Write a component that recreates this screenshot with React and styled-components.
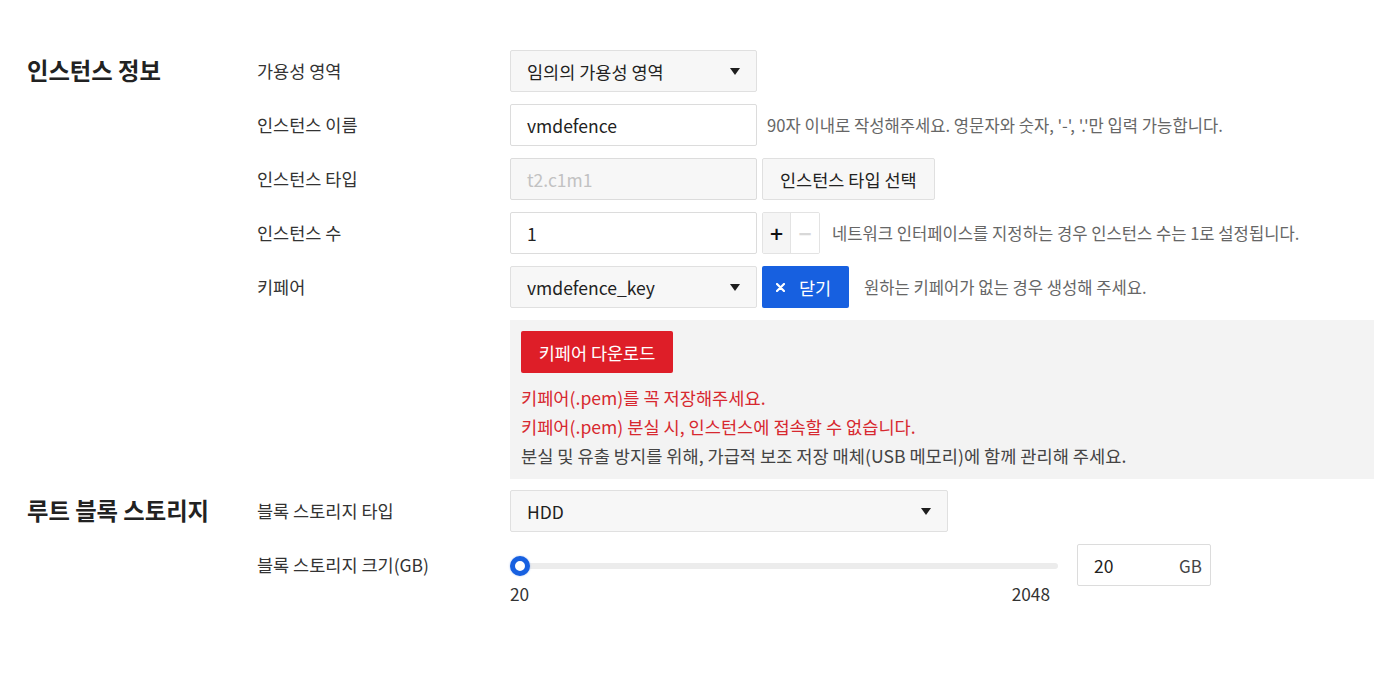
import React from "react";
import styled, { createGlobalStyle } from "styled-components";

const Global = createGlobalStyle`
  html, body { margin: 0; padding: 0; background: #fff; }
  body {
    font-family: "Noto Sans CJK KR", "Noto Sans", sans-serif;
    color: #333;
    -webkit-font-smoothing: antialiased;
  }
  * { box-sizing: border-box; }
`;

const Page = styled.div`
  padding: 50px 17px 80px 27px;
  display: flex;
  flex-direction: column;
  gap: 11px;
`;

const Section = styled.section`
  display: grid;
  grid-template-columns: 230px 1fr;
`;

const SectionTitle = styled.h2`
  margin: 0;
  font-size: 23.3px;
  font-weight: 700;
  color: #222;
  line-height: 40px;
`;

const Rows = styled.div`
  display: flex;
  flex-direction: column;
  gap: 12px;
`;

const Row = styled.div`
  display: grid;
  grid-template-columns: 253px 1fr;
  align-items: ${(p) => (p.$top ? "start" : "center")};
`;

const Label = styled.div`
  font-size: 17.5px;
  color: #333;
  line-height: 42px;
  white-space: nowrap;
`;

const Controls = styled.div`
  display: flex;
  align-items: ${(p) => (p.$top ? "flex-start" : "center")};
  gap: 5px;
`;

const Field = styled.div`
  width: ${(p) => p.$w || 247}px;
  height: 42px;
  border: 1px solid ${(p) => (p.$select ? "#e0e0e0" : "#dcdcdc")};
  border-radius: 2px;
  background: ${(p) => (p.$select || p.$disabled ? "#f7f7f7" : "#fff")};
  color: ${(p) => (p.$disabled ? "#c2c2c2" : "#222")};
  font-size: 17.5px;
  display: flex;
  align-items: center;
  justify-content: space-between;
  padding: 0 16px;
  flex-shrink: 0;
  white-space: nowrap;
`;

const Caret = styled.span`
  width: 0;
  height: 0;
  border-left: 5px solid transparent;
  border-right: 5px solid transparent;
  border-top: 7px solid #1e1e1e;
`;

const Hint = styled.span`
  font-size: 16.6px;
  color: #666;
  margin-left: ${(p) => p.$ml ?? 5}px;
  white-space: nowrap;
`;

const GrayButton = styled.button`
  height: 42px;
  padding: 0 17px;
  border: 1px solid #e0e0e0;
  border-radius: 2px;
  background: #f7f7f7;
  font-family: inherit;
  font-size: 17.5px;
  color: #222;
  white-space: nowrap;
`;

const Stepper = styled.div`
  display: flex;
  height: 42px;
  border: 1px solid #e3e3e3;
  border-radius: 2px;
  overflow: hidden;
`;

const StepBtn = styled.button`
  width: 28px;
  border: none;
  border-right: ${(p) => (p.$first ? "1px solid #e3e3e3" : "none")};
  background: ${(p) => (p.$disabled ? "#fff" : "#f5f5f5")};
  color: ${(p) => (p.$disabled ? "#d8d8d8" : "#111")};
  font-family: "DejaVu Sans", sans-serif;
  font-size: 18px;
  font-weight: 700;
  padding: 0;
  display: flex;
  align-items: center;
  justify-content: center;
`;

const PrimaryButton = styled.button`
  height: 42px;
  width: 87px;
  border: none;
  border-radius: 2px;
  background: #1760e0;
  color: #fff;
  font-family: inherit;
  font-size: 17.5px;
  display: flex;
  align-items: center;
  justify-content: flex-start;
  gap: 14px;
  padding: 0 0 0 14px;
  white-space: nowrap;
`;

const Panel = styled.div`
  background: #f3f3f3;
  padding: 11px 11px 9px;
  display: flex;
  flex-direction: column;
  align-items: flex-start;
  gap: 10px;
`;

const DangerButton = styled.button`
  height: 42px;
  width: 152px;
  border: none;
  border-radius: 2px;
  background: #de1e28;
  color: #fff;
  font-family: inherit;
  font-size: 17.5px;
  white-space: nowrap;
`;

const Notes = styled.div`
  display: flex;
  flex-direction: column;
`;

const Note = styled.div`
  font-size: 17.6px;
  line-height: 29px;
  white-space: nowrap;
  color: ${(p) => (p.$danger ? "#d7282f" : "#444")};
`;

const SliderWrap = styled.div`
  width: 548px;
  display: flex;
  flex-direction: column;
  padding-top: 19px;
`;

const Track = styled.div`
  position: relative;
  height: 6px;
  background: #ececec;
  border-radius: 3px;
`;

const Thumb = styled.div`
  position: absolute;
  left: 0;
  top: 50%;
  width: 20px;
  height: 20px;
  margin-top: -10px;
  border-radius: 50%;
  background: #fff;
  border: 5px solid #1760e0;
  box-shadow: 0 0 2px rgba(23, 96, 224, 0.4);
`;

const Scale = styled.div`
  display: flex;
  justify-content: space-between;
  font-size: 17.3px;
  color: #333;
  margin-top: 14px;
  padding-right: 8px;
  line-height: 22px;
`;

const SizeBox = styled(Field)`
  margin-left: 14px;
  padding: 0 8px 0 16px;
  color: #222;
`;

const Unit = styled.span`
  color: #444;
  font-size: 17px;
`;

export default function App() {
  return (
    <>
      <Global />
      <Page>
        <Section>
          <SectionTitle>인스턴스 정보</SectionTitle>
          <Rows>
            <Row>
              <Label>가용성 영역</Label>
              <Controls>
                <Field $select>
                  임의의 가용성 영역
                  <Caret />
                </Field>
              </Controls>
            </Row>
            <Row>
              <Label>인스턴스 이름</Label>
              <Controls>
                <Field>vmdefence</Field>
                <Hint $ml={5}>
                  90자 이내로 작성해주세요. 영문자와 숫자, '-', '.'만 입력 가능합니다.
                </Hint>
              </Controls>
            </Row>
            <Row>
              <Label>인스턴스 타입</Label>
              <Controls>
                <Field $disabled>t2.c1m1</Field>
                <GrayButton>인스턴스 타입 선택</GrayButton>
              </Controls>
            </Row>
            <Row>
              <Label>인스턴스 수</Label>
              <Controls>
                <Field>1</Field>
                <Stepper>
                  <StepBtn $first>+</StepBtn>
                  <StepBtn $disabled>−</StepBtn>
                </Stepper>
                <Hint $ml={7}>
                  네트워크 인터페이스를 지정하는 경우 인스턴스 수는 1로 설정됩니다.
                </Hint>
              </Controls>
            </Row>
            <Row>
              <Label>키페어</Label>
              <Controls>
                <Field $select>
                  vmdefence_key
                  <Caret />
                </Field>
                <PrimaryButton>
                  <svg width="9" height="9" viewBox="0 0 9 9">
                    <path d="M1 1L8 8M8 1L1 8" stroke="#fff" strokeWidth="2.2" strokeLinecap="round" />
                  </svg>
                  닫기
                </PrimaryButton>
                <Hint $ml={10}>원하는 키페어가 없는 경우 생성해 주세요.</Hint>
              </Controls>
            </Row>
            <Row $top>
              <div />
              <Panel>
                <DangerButton>키페어 다운로드</DangerButton>
                <Notes>
                  <Note $danger>키페어(.pem)를 꼭 저장해주세요.</Note>
                  <Note $danger>키페어(.pem) 분실 시, 인스턴스에 접속할 수 없습니다.</Note>
                  <Note>분실 및 유출 방지를 위해, 가급적 보조 저장 매체(USB 메모리)에 함께 관리해 주세요.</Note>
                </Notes>
              </Panel>
            </Row>
          </Rows>
        </Section>
        <Section>
          <SectionTitle>루트 블록 스토리지</SectionTitle>
          <Rows>
            <Row>
              <Label>블록 스토리지 타입</Label>
              <Controls>
                <Field $select $w={438}>
                  HDD
                  <Caret />
                </Field>
              </Controls>
            </Row>
            <Row $top>
              <Label>블록 스토리지 크기(GB)</Label>
              <Controls $top>
                <SliderWrap>
                  <Track>
                    <Thumb />
                  </Track>
                  <Scale>
                    <span>20</span>
                    <span>2048</span>
                  </Scale>
                </SliderWrap>
                <SizeBox $w={134}>
                  20
                  <Unit>GB</Unit>
                </SizeBox>
              </Controls>
            </Row>
          </Rows>
        </Section>
      </Page>
    </>
  );
}
